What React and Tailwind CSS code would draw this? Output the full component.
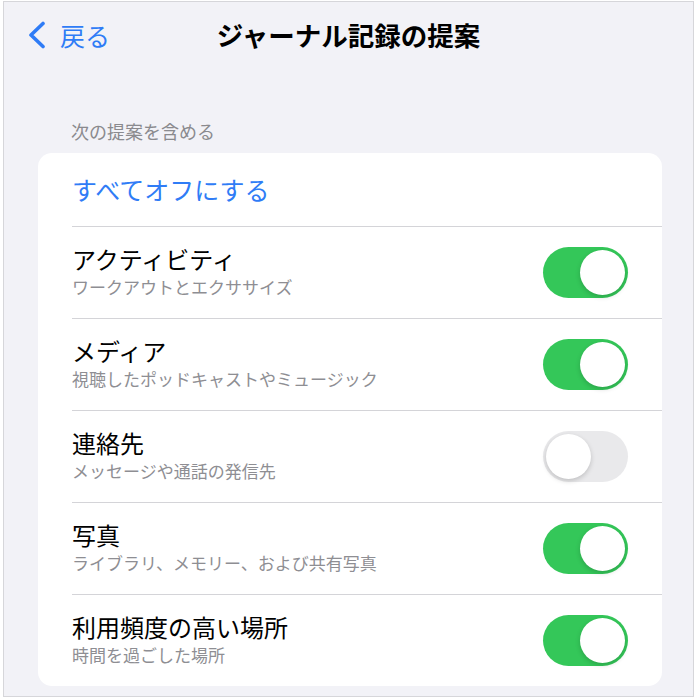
import { useState } from 'react';

const font = { fontFamily: '"Noto Sans CJK JP", "Noto Sans", sans-serif' };

const items = [
  { id: 'activity', title: 'アクティビティ', sub: 'ワークアウトとエクササイズ', on: true },
  { id: 'media', title: 'メディア', sub: '視聴したポッドキャストやミュージック', on: true },
  { id: 'contacts', title: '連絡先', sub: 'メッセージや通話の発信先', on: false },
  { id: 'photos', title: '写真', sub: 'ライブラリ、メモリー、および共有写真', on: true },
  { id: 'places', title: '利用頻度の高い場所', sub: '時間を過ごした場所', on: true },
];

const Toggle = ({ on, onClick }) => (
  <button
    onClick={onClick}
    className={`relative w-[85px] h-[51px] rounded-full shrink-0 flex items-center px-[3px] ${
      on ? 'bg-[#34c759] justify-end' : 'bg-[#e9e9eb] justify-start'
    }`}
  >
    <span className="w-[45px] h-[45px] rounded-full bg-white shadow-[0_2px_5px_rgba(0,0,0,0.18)]" />
  </button>
);

export default function App() {
  const [state, setState] = useState(items);

  const flip = (id) =>
    setState((prev) => prev.map((it) => (it.id === id ? { ...it, on: !it.on } : it)));

  return (
    <div className="w-[700px] h-[700px] bg-white overflow-hidden" style={font}>
      <div className="ml-[3px] mt-[1px] w-[691px] h-[696px] border border-[#d6d6da] bg-[#f2f2f7]">
        {/* Nav bar */}
        <div className="relative h-[66px] flex items-center">
          <div className="flex items-center ml-[23px] gap-[14px] text-[#2f7cf6]">
            <svg width="19" height="28" viewBox="0 0 19 28" fill="none">
              <path d="M16 2.5 L4 14 L16 25.5" stroke="currentColor" strokeWidth="3.6" strokeLinecap="round" strokeLinejoin="round" />
            </svg>
            <span className="text-[25px] leading-none">戻る</span>
          </div>
          <div className="absolute left-0 right-0 text-center text-[26.5px] font-bold text-black leading-none pointer-events-none">
            ジャーナル記録の提案
          </div>
        </div>

        {/* Section header */}
        <div className="mt-[52px] ml-[67px] text-[18px] leading-[22px] text-[#8a8a8e]">次の提案を含める</div>

        {/* Card */}
        <div className="mt-[11px] ml-[34px] w-[624px] bg-white rounded-[14px] overflow-hidden">
          <div className="h-[73px] pl-[34px] flex items-center">
            <span className="text-[25px] text-[#2f7cf6] leading-none">すべてオフにする</span>
          </div>
          {state.map((it) => (
            <div key={it.id} className="pl-[34px]">
              <div className="h-[92px] border-t border-[#d4d4d8] pr-[34px] flex items-center justify-between">
                <div className="flex flex-col gap-[3px] pb-[2px]">
                  <span className="text-[24px] leading-[28px] text-black">{it.title}</span>
                  <span className="text-[17px] leading-[22px] text-[#8e8e93]">{it.sub}</span>
                </div>
                <Toggle on={it.on} onClick={() => flip(it.id)} />
              </div>
            </div>
          ))}
        </div>
      </div>
    </div>
  );
}
